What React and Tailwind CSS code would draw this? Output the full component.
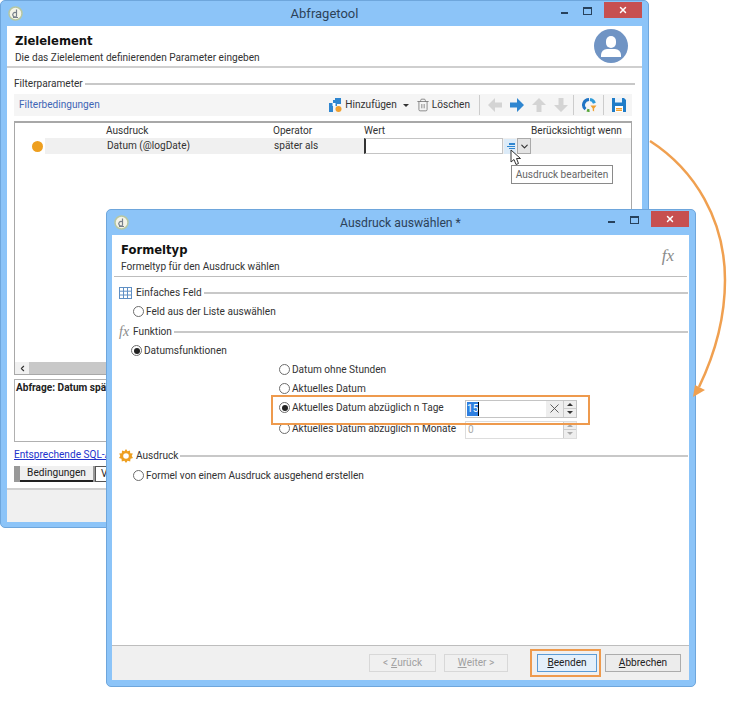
import { ChevronDown, ChevronLeft, Trash2, X } from "lucide-react";

const uiFont = "font-['Roboto',sans-serif]";

function AppLogo() {
  return (
    <svg width="15" height="15" viewBox="0 0 15 15">
      <circle cx="7.5" cy="7.5" r="6.5" fill="#f4f4e8" stroke="#b7c7a2" strokeWidth="1.5" />
      <path d="M8.500 3.500v7M8.500 10.500a2.300 2.300 0 1 1 0-3.600M5 11.500h5" fill="none" stroke="#77808a" strokeWidth="1.2" />
    </svg>
  );
}

function WindowButtons() {
  return (
    <div className="flex items-start">
      <div className="mt-[11px] h-[2px] w-[7px] bg-[#27415c]" />
      <div className="mt-[6px] ml-[15px] h-[8px] w-[9px] border border-t-2 border-[#27415c]" />
      <div className="ml-[12px] mt-px flex h-[16px] w-[38px] items-center justify-center bg-[#c75050]">
        <X size={10} strokeWidth={3.5} color="#fff" />
      </div>
    </div>
  );
}

function Legend({ icon, children }) {
  return (
    <div className="flex h-[19px] items-center">
      {icon}
      <span className="mr-[2px] text-[10.1px] text-[#333]">{children}</span>
      <div className="h-[2px] flex-1 bg-[#c8c8c8]" />
    </div>
  );
}

function Radio({ checked, label, className = "" }) {
  return (
    <div className={`flex items-center gap-[2px] ${className}`}>
      <span className="flex h-[11px] w-[11px] shrink-0 items-center justify-center rounded-full border border-[#6d6d6d] bg-white">
        {checked ? <span className="h-[6px] w-[6px] rounded-full bg-[#222]" /> : null}
      </span>
      <span className="whitespace-nowrap text-[10.1px] text-[#333]">{label}</span>
    </div>
  );
}

function Spinner({ disabled }) {
  const color = disabled ? "#aaa" : "#333";
  return (
    <div className="flex h-full w-[13px] flex-col border-l border-[#ccc] bg-[#eee]">
      <div className="flex flex-1 items-center justify-center border-b border-[#ccc]">
        <div className="h-0 w-0 border-x-[3px] border-b-[3px] border-x-transparent" style={{ borderBottomColor: color }} />
      </div>
      <div className="flex flex-1 items-center justify-center">
        <div className="h-0 w-0 border-x-[3px] border-t-[3px] border-x-transparent" style={{ borderTopColor: color }} />
      </div>
    </div>
  );
}

function FooterButton({ children, className = "" }) {
  return (
    <div className={`flex h-[18px] items-center justify-center border text-[10.1px] ${className}`}>{children}</div>
  );
}

function AddIcon() {
  return (
    <svg width="13" height="14" viewBox="0 0 13 14">
      <path d="M6 0h6v6H8v2H4v6H0V5h4V2h2z" fill="#2f86d0" />
      <rect x="3.500" y="5" width="3" height="3" fill="#fff" />
      <circle cx="9.500" cy="11" r="3" fill="#f0a030" />
    </svg>
  );
}

function BlockArrow({ color, rotate = 0 }) {
  return (
    <svg width="14" height="14" viewBox="0 0 14 14" style={{ transform: `rotate(${rotate}deg)` }}>
      <path d="M0 4.500h7V0l7 7-7 7V9.500H0z" fill={color} />
    </svg>
  );
}

function RefreshIcon() {
  return (
    <svg width="16" height="16" viewBox="0 0 16 16" fill="none">
      <path d="M8 2.500a5.500 5.500 0 0 0-3.500 9.700" stroke="#1f74c4" strokeWidth="3" />
      <path d="M6 13.200a5.500 5.500 0 0 0 2.500.3" stroke="#57a639" strokeWidth="3" />
      <path d="M9 2.600a5.500 5.500 0 0 1 4.400 3.600" stroke="#2e9bd8" strokeWidth="3" />
      <path d="M9.500 8.500h6l-2.400 3v3l-1.400-1v-2z" fill="#f0a030" />
    </svg>
  );
}

function SaveIcon() {
  return (
    <svg width="14" height="14" viewBox="0 0 14 14">
      <path d="M0 0h12l2 2v12H0z" fill="#1f7cc8" />
      <rect x="3" y="0" width="7" height="4.500" fill="#e8f2fb" />
      <rect x="3" y="8" width="8" height="6" fill="#fff" />
      <rect x="4" y="10" width="6" height="1.500" fill="#f0a030" />
      <rect x="4" y="12" width="6" height="1" fill="#f0a030" />
    </svg>
  );
}

function GridIcon() {
  return (
    <svg width="13" height="12" viewBox="0 0 13 12" className="mr-[4px]">
      <rect x="0.500" y="0.500" width="12" height="11" fill="#fff" stroke="#5f8fc4" />
      <path d="M4.500 0v12M8.500 0v12M0 4.200h13M0 8h13" stroke="#5f8fc4" />
    </svg>
  );
}

function GearIcon() {
  return (
    <svg width="14" height="14" viewBox="0 0 14 14" className="mr-[3px]">
      <path d="M7 0l1.500 2.300L11 1.500l.2 2.700 2.600.3-1.100 2.500L14 9l-2.500.8-.3 2.700-2.600-.7L7 14l-1.600-2.200-2.600.7-.3-2.700L0 9l1.300-2-1.100-2.500 2.600-.3L3 1.500l2.500.8z" fill="#ee9f1f" />
      <circle cx="7" cy="7" r="2.800" fill="#fff" />
    </svg>
  );
}

function FxMark({ className = "" }) {
  return <span className={`font-['Liberation_Serif',serif] italic text-[#8a8a8a] ${className}`}>fx</span>;
}

function FilterWindow() {
  return (
    <div className="absolute left-0 top-0 flex h-[528px] w-[649px] flex-col rounded-[5px] border border-[#6ea6dc] bg-[#8cc4f8] pb-[5px] pl-[6px] pr-[6px]">
      <div className="relative flex h-[25px] shrink-0 items-start justify-between">
        <div className="mt-[5px] ml-[1px]"><AppLogo /></div>
        <span className="absolute left-0 right-0 top-[3px] text-center text-[13px] text-[#2c4258]">Abfragetool</span>
        <WindowButtons />
      </div>

      <div className="flex flex-1 flex-col bg-white">
        <div className="flex h-[42px] shrink-0 items-center justify-between border-b-2 border-[#cfcfcf] pl-[8px] pr-[14px]">
          <div className="pt-[6px]">
            <p className="font-['DejaVu_Sans',sans-serif] text-[11.6px] leading-[17px] font-bold text-[#111]">Zielelement</p>
            <p className="text-[10.1px] leading-[15px] text-[#333]">Die das Zielelement definierenden Parameter eingeben</p>
          </div>
          <div className="relative h-[34px] w-[34px] overflow-hidden rounded-full bg-[#7094c4]">
            <div className="absolute left-[12px] top-[7px] h-[12px] w-[10px] rounded-full bg-white" />
            <div className="absolute left-[7px] top-[20px] h-[8px] w-[20px] rounded-t-md bg-white" />
          </div>
        </div>

        <div className="flex flex-1 flex-col pl-[7px] pr-[10px]">
          <div className="mt-[6px] mr-[-3px]">
            <Legend>Filterparameter</Legend>
          </div>
          <div className="mt-[1px] flex h-[22px] shrink-0 items-center bg-[#f5f5f5] pl-[5px] pr-[6px]">
            <span className="text-[10.1px] text-[#3f66b5]">Filterbedingungen</span>
            <div className="ml-auto flex items-center">
              <AddIcon />
              <span className="ml-[3px] text-[10.1px] text-[#333]">Hinzufügen</span>
              <div className="ml-[6px] h-0 w-0 border-x-[3px] border-t-[3px] border-x-transparent border-t-[#333]" />
              <Trash2 size={14} strokeWidth={1.4} color="#777" className="ml-[7px]" />
              <span className="ml-[2px] text-[10.1px] text-[#333]">Löschen</span>
              <div className="ml-[9px] mr-[8px] h-[20px] w-px bg-[#ccc]" />
              <div className="flex w-[80px] justify-between">
                <BlockArrow color="#d4d4d4" rotate={180} />
                <BlockArrow color="#2f86d0" />
                <BlockArrow color="#d4d4d4" rotate={-90} />
                <BlockArrow color="#d4d4d4" rotate={90} />
              </div>
              <div className="ml-[5px] mr-[7px] h-[20px] w-px bg-[#ccc]" />
              <RefreshIcon />
              <div className="ml-[6px] mr-[8px] h-[20px] w-px bg-[#ccc]" />
              <SaveIcon />
            </div>
          </div>

          <div className="mt-[5px] flex h-[254px] shrink-0 flex-col border border-[#a8a8a8] border-t-2">
            <div className="grid h-[15px] shrink-0 grid-cols-[91px_167px_91px_167px_1fr] items-center text-[10.1px] text-[#333]">
              <span />
              <span>Ausdruck</span>
              <span>Operator</span>
              <span>Wert</span>
              <span>Berücksichtigt wenn</span>
            </div>
            <div className="grid h-[15px] shrink-0 grid-cols-[30px_61px_167px_91px_1fr] items-center text-[10.1px] text-[#333]">
              <div className="flex h-full items-center pl-[17px]">
                <span className="h-[11px] w-[11px] rounded-full bg-[#ee9f1f]" />
              </div>
              <span className="h-full bg-[#f0f0f0]" />
              <span className="flex h-full items-center bg-[#f0f0f0] pl-[1px]">Datum (@logDate)</span>
              <span className="flex h-full items-center bg-[#f0f0f0] pl-[1px]">später als</span>
              <div className="flex h-full items-center bg-[#f0f0f0]">
                <div className="h-[16px] w-[139px] border border-[#c4c4c4] border-l-2 border-l-[#333] bg-white" />
                <div className="ml-px flex h-[15px] w-[12px] flex-col items-end justify-center gap-px bg-[#dcebf8] pr-[1px]">
                  <span className="h-[2px] w-[6px] bg-[#2f86d0]" />
                  <span className="h-[1px] w-[8px] bg-[#2f86d0]" />
                  <span className="h-[1px] w-[6px] bg-[#2f86d0]" />
                </div>
                <div className="ml-px flex h-[16px] w-[14px] items-center justify-center border border-[#aaa] bg-[#e4e4e4]">
                  <ChevronDown size={11} strokeWidth={2.5} color="#333" />
                </div>
              </div>
            </div>
            <div className="mt-auto flex h-[12px] shrink-0 items-center bg-[#c8c8c8]">
              <div className="flex h-full w-[14px] items-center justify-center bg-[#f0f0f0]">
                <ChevronLeft size={9} strokeWidth={3} color="#333" />
              </div>
            </div>
          </div>

          <div className="mt-[4px] h-[63px] shrink-0 border border-[#b0b0b0] px-[1px] text-[10.1px] font-bold text-[#222]">
            Abfrage: Datum später als
          </div>
          <p className="mt-[5px] h-[15px] w-[92px] overflow-hidden whitespace-nowrap text-[10.1px] text-[#2233cc] underline">Entsprechende SQL-Abfrage</p>
          <div className="mt-[4px] flex h-[16px] w-[240px] shrink-0 items-stretch bg-[#999] pl-[6px]">
            <div className="flex w-[73px] items-center justify-center border-b-2 border-[#222] bg-[#f0f0f0] text-[10.1px] text-[#222]">Bedingungen</div>
            <div className="ml-[2px] w-[60px] border border-[#555] bg-white pl-[5px] text-[10.1px] leading-[14px] text-[#222]">Verhalten</div>
          </div>
          <div className="flex-1" />
        </div>
        <div className="h-[34px] shrink-0 border-t-2 border-[#d0d0d0] bg-[#f0f0f0]" />
      </div>
    </div>
  );
}

function FormulaWindow() {
  return (
    <div className="absolute left-[106px] top-[209px] flex h-[478px] w-[590px] flex-col rounded-[5px] border border-[#6ea6dc] bg-[#8cc4f8] pb-[6px] pl-[5px] pr-[6px]">
      <div className="relative flex h-[25px] shrink-0 items-start justify-between">
        <div className="mt-[5px] ml-[2px]"><AppLogo /></div>
        <span className="absolute left-0 right-0 top-[4px] text-center text-[12.2px] text-[#2c4258]">Ausdruck auswählen *</span>
        <WindowButtons />
      </div>

      <div className="flex flex-1 flex-col bg-white">
        <div className="mx-[2px] flex h-[42px] shrink-0 items-center justify-between border-b border-[#bdbdbd] pl-[7px] pr-[13px]">
          <div className="pt-[5px]">
            <p className="font-['DejaVu_Sans',sans-serif] text-[11.6px] leading-[17px] font-bold text-[#111]">Formeltyp</p>
            <p className="text-[10.1px] leading-[15px] text-[#333]">Formeltyp für den Ausdruck wählen</p>
          </div>
          <FxMark className="text-[17px]" />
        </div>

        <div className="flex flex-1 flex-col pl-[7px] pr-[1px]">
          <div className="mt-[6px]">
            <Legend icon={<GridIcon />}>Einfaches Feld</Legend>
          </div>
          <Radio label="Feld aus der Liste auswählen" className="h-[19px] pl-[14px]" />
          <div className="mt-px">
            <Legend icon={<FxMark className="mr-[4px] text-[14px] leading-none" />}>Funktion</Legend>
          </div>
          <Radio checked label="Datumsfunktionen" className="h-[19px] pl-[12px]" />
          <Radio label="Datum ohne Stunden" className="h-[19px] pl-[160px]" />
          <Radio label="Aktuelles Datum" className="h-[19px] pl-[160px]" />
          <div className="flex h-[20px] items-center pl-[160px]">
            <Radio checked label="Aktuelles Datum abzüglich n Tage" className="w-[186px]" />
            <div className="mt-px flex h-[18px] w-[112px] items-center border border-[#c4c4c4] bg-white pl-[1px]">
              <span className="bg-[#2f7fe0] text-[10.1px] leading-[14px] text-white">15</span>
              <span className="h-[14px] w-px bg-black" />
              <div className="ml-auto flex h-full items-center bg-[#eee] px-[1px]">
                <X size={15} strokeWidth={1.5} color="#555" />
              </div>
              <Spinner />
            </div>
          </div>
          <div className="flex h-[22px] items-center pl-[160px]">
            <Radio label="Aktuelles Datum abzüglich n Monate" className="w-[186px]" />
            <div className="mt-px flex h-[18px] w-[112px] items-center justify-between border border-[#ddd] bg-white pl-[2px] text-[10.1px] text-[#aaa]">
              0
              <Spinner disabled />
            </div>
          </div>
          <div className="mt-[6px]">
            <Legend icon={<GearIcon />}>Ausdruck</Legend>
          </div>
          <Radio label="Formel von einem Ausdruck ausgehend erstellen" className="h-[21px] pl-[14px]" />
          <div className="flex-1" />
        </div>

        <div className="flex h-[35px] shrink-0 items-center border-t border-[#bdbdbd] bg-[#f0f0f0] pr-[8px]">
          <div className="ml-auto flex items-center">
            <FooterButton className="w-[67px] border-[#d8d8d8] text-[#a0a0a0]">&lt; <u className="ml-[3px]">Z</u>urück</FooterButton>
            <FooterButton className="ml-[8px] w-[64px] border-[#d8d8d8] text-[#a0a0a0]"><u>W</u>eiter &gt;</FooterButton>
            <FooterButton className="ml-[29px] w-[60px] border-[#5b9bd5] bg-[#e4f0fb] text-[#222]"><u>B</u>eenden</FooterButton>
            <FooterButton className="ml-[8px] w-[76px] border-[#acacac] bg-[#ececec] text-[#222]"><u>A</u>bbrechen</FooterButton>
          </div>
        </div>
      </div>
    </div>
  );
}

export default function App() {
  return (
    <div className={`relative h-[702px] w-[750px] overflow-hidden bg-white ${uiFont}`}>
      <FilterWindow />

      {/* cursor and tooltip over the first window */}
      <svg width="12" height="17" viewBox="0 0 12 17" className="absolute left-[510px] top-[149px]">
        <path d="M1 1v12l3-2.500 2 5 2.500-1-2-5h4z" fill="#fff" stroke="#333" />
      </svg>
      <div className="absolute left-[511px] top-[165px] flex h-[19px] w-[102px] items-center justify-center whitespace-nowrap border border-[#8a8a8a] bg-white text-[10.1px] text-[#666]">
        Ausdruck bearbeiten
      </div>

      <FormulaWindow />

      {/* callouts drawn on top of the screenshot */}
      <div className="absolute left-[271px] top-[395px] h-[30px] w-[319px] border-[2.500px] border-[#ee9a4d]" />
      <div className="absolute left-[530px] top-[649px] h-[28px] w-[71px] border-[2.500px] border-[#ee9a4d]" />
      <svg width="110" height="270" viewBox="0 0 110 270" className="absolute left-[640px] top-[135px]">
        <path d="M10 6C55 35 85 85 85 145C85 190 72 225 59 252" fill="none" stroke="#f0a050" strokeWidth="2.500" />
        <path d="M53 262L65 255L55 250Z" fill="#f0a050" />
      </svg>
    </div>
  );
}
